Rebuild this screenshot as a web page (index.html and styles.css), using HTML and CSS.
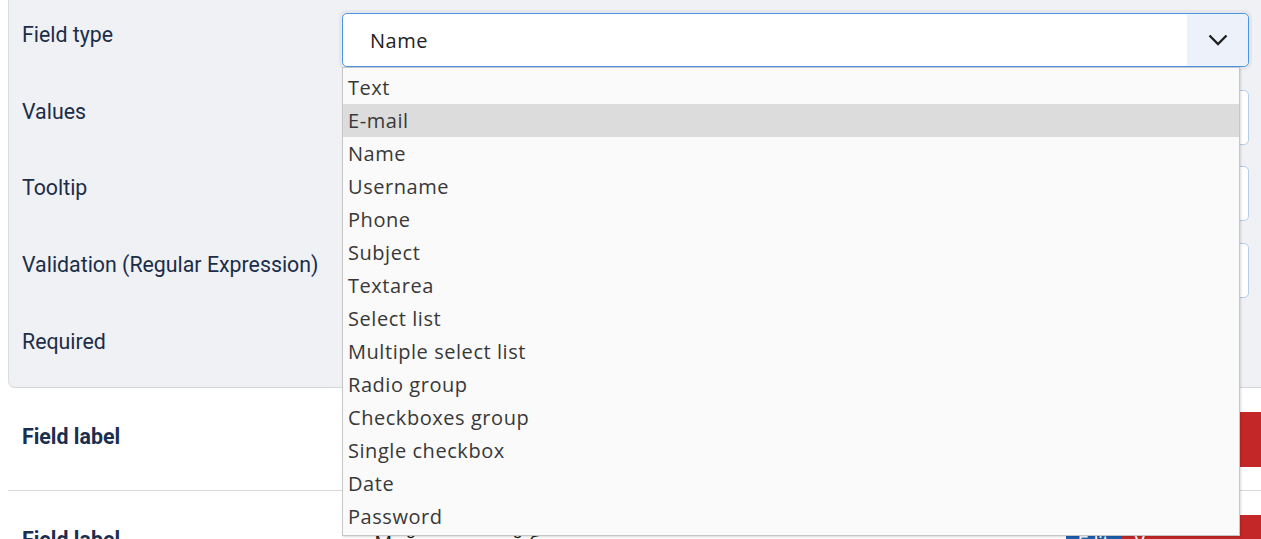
FILE: index.html
```html
<!DOCTYPE html>
<html>
<head>
<meta charset="utf-8">
<link rel="stylesheet" href="styles.css">
</head>
<body>
<div class="page">
  <div class="panel">
    <div class="row">
      <div class="label">Field type</div>
      <div class="control">
        <div class="select">
          <span class="select-value">Name</span>
          <span class="select-arrow">
            <svg width="20" height="12" viewBox="0 0 20 12"><path d="M1.5 1.5 L10 10 L18.5 1.5" fill="none" stroke="#222" stroke-width="2.4"/></svg>
          </span>
          <ul class="menu">
            <li>Text</li>
            <li class="hover">E-mail</li>
            <li>Name</li>
            <li>Username</li>
            <li>Phone</li>
            <li>Subject</li>
            <li>Textarea</li>
            <li>Select list</li>
            <li>Multiple select list</li>
            <li>Radio group</li>
            <li>Checkboxes group</li>
            <li>Single checkbox</li>
            <li>Date</li>
            <li>Password</li>
          </ul>
        </div>
      </div>
    </div>
    <div class="row">
      <div class="label">Values</div>
      <div class="control"><div class="input"></div></div>
    </div>
    <div class="row">
      <div class="label">Tooltip</div>
      <div class="control"><div class="input"></div></div>
    </div>
    <div class="row">
      <div class="label">Validation (Regular Expression)</div>
      <div class="control"><div class="input"></div></div>
    </div>
    <div class="row">
      <div class="label">Required</div>
      <div class="control"><div class="toggle"></div></div>
    </div>
  </div>
  <div class="field-row">
    <div class="field-label">Field label</div>
    <div class="field-input"></div>
    <div class="btns"><span class="btn blue"></span><span class="btn red"></span></div>
  </div>
  <div class="field-row sep">
    <div class="field-label">Field label</div>
    <div class="field-input">Мой текстовый блок</div>
    <div class="btns"><span class="btn blue">Edit</span><span class="btn red">Удалить</span></div>
  </div>
</div>
</body>
</html>
```
FILE: styles.css
```css
html, body {
  margin: 0;
  padding: 0;
  overflow: hidden;
  background: #fff;
}
body {
  font-family: Roboto, "Liberation Sans", sans-serif;
  color: #1c2d48;
}
.page {
  width: 1261px;
  height: 539px;
  overflow: hidden;
}
.panel {
  margin-left: 8px;
  background: #eff1f5;
  border-left: 1px solid #dadde2;
  border-bottom: 1px solid #d3d6db;
  border-bottom-left-radius: 7px;
  padding: 13px 12px 0 13px;
  height: 374px;
}
.row {
  display: flex;
  height: 76.7px;
}
.label {
  width: 320px;
  font-size: 21.33px;
  line-height: 30px;
  padding-top: 7px;
  color: #1c2d48;
}
.control {
  flex: 1;
}
.select {
  position: relative;
  height: 52px;
  background: #fff;
  border: 1px solid #4b95e6;
  border-radius: 5px;
  box-shadow: 0 0 0 3px #e5e7eb;
  display: flex;
  align-items: center;
}
.select-value {
  flex: 1;
  padding-left: 27px;
  font-family: "Open Sans", "Noto Sans", sans-serif;
  font-size: 20px;
  letter-spacing: 0.5px;
  color: #222;
}
.select-arrow {
  width: 61px;
  height: 52px;
  background: #edf2fa;
  border-radius: 0 5px 5px 0;
  display: flex;
  align-items: center;
  justify-content: center;
}
.input {
  height: 53px;
  background: #fff;
  border: 1px solid #b5cde9;
  border-radius: 5px;
}
.toggle {
  height: 40px;
}
.menu {
  position: absolute;
  left: -1px;
  top: 53px;
  width: 896px;
  margin: 0;
  padding: 3px 0 2px;
  list-style: none;
  background: #fafafa;
  border: 1px solid #c6c6c6;
  box-shadow: 1px 1px 2px rgba(0,0,0,0.15);
  font-family: "Open Sans", "Noto Sans", sans-serif;
  font-size: 20px;
  letter-spacing: 0.55px;
  color: #383838;
  z-index: 5;
}
.menu li {
  height: 33px;
  line-height: 34px;
  padding-left: 5px;
}
.menu li.hover {
  background: #dcdcdc;
}
.field-row {
  margin-left: 8px;
  height: 102px;
  display: flex;
  align-items: flex-start;
  padding-top: 24px;
  box-sizing: border-box;
}
.field-row.sep {
  border-top: 1px solid #d8d8d8;
  height: 103px;
}
.field-label {
  width: 334px;
  padding-left: 14px;
  font-size: 21.33px;
  font-weight: bold;
  line-height: 30px;
  padding-top: 10px;
  color: #1a2f50;
}
.field-input {
  width: 700px;
  height: 55px;
  padding-left: 22px;
  line-height: 55px;
  font-size: 20px;
  color: #222;
  font-family: "Open Sans", sans-serif;
}
.btns {
  display: flex;
  margin-left: auto;
}
.btn {
  height: 55px;
  line-height: 55px;
  padding: 0 12px;
  color: #fff;
  font-size: 18px;
}
.btn.blue {
  background: #1f5fae;
  width: 32px;
}
.btn.red {
  background: #c42727;
  width: 115px;
}
```
